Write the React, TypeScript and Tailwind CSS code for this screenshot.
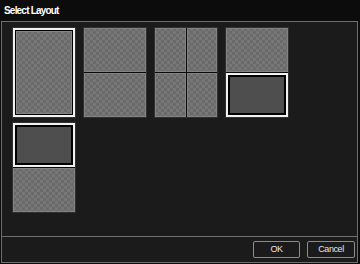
const checker =
  "bg-[conic-gradient(#777777_25%,#6a6a6a_0_50%,#777777_0_75%,#6a6a6a_0)] bg-[length:6px_6px]"

type Cell = "plain" | "picked" | "filled"

function LayoutCell({ kind }: { kind: Cell }) {
  if (kind === "filled") {
    return (
      <div className="flex-1 border-2 border-[#f2f2f2] bg-black p-[2px]">
        <div className="h-full w-full bg-[#4e4e4e]" />
      </div>
    )
  }
  if (kind === "picked") {
    return (
      <div className="flex-1 border-2 border-[#f2f2f2] bg-black p-[1px]">
        <div className={`h-full w-full ${checker} shadow-[inset_0_0_0_1px_#858585]`} />
      </div>
    )
  }
  return <div className={`flex-1 ${checker} shadow-[inset_0_0_0_1px_#828282]`} />
}

const layouts: Cell[][][] = [
  [["picked"]],
  [["plain"], ["plain"]],
  [["plain", "plain"], ["plain", "plain"]],
  [["plain"], ["filled"]],
  [["filled"], ["plain"]],
]

export default function App() {
  return (
    <div className="flex h-[264px] w-[360px] flex-col bg-[#0c0c0c] font-['Liberation_Sans',Arial,sans-serif]">
      <div className="flex h-[21px] shrink-0 items-center px-[4px] text-[10px] font-bold tracking-[-0.8px] text-white">
        Select Layout
      </div>
      <div className="mb-[1px] ml-[1px] mr-[2px] flex flex-1 flex-col border border-[#6e6e6e] bg-[#1b1b1b]">
        <div className="grid h-[214px] grid-cols-[repeat(4,64px)] content-start gap-x-[7px] gap-y-[4px] pl-[10px] pt-[5px]">
          {layouts.map((rows, i) => (
            <div key={i} className="flex h-[91px] flex-col bg-[#303030] p-[1px]">
              <div className="flex flex-1 flex-col gap-[1px] bg-[#0a0a0a]">
                {rows.map((row, r) => (
                  <div key={r} className="flex flex-1 gap-[1px]">
                    {row.map((cell, c) => (
                      <LayoutCell key={c} kind={cell} />
                    ))}
                  </div>
                ))}
              </div>
            </div>
          ))}
        </div>
        <div className="flex flex-1 items-center justify-end gap-[7px] border-t border-[#6e6e6e] pr-[2px]">
          <button className="h-[17px] w-[47px] rounded-[2px] border border-[#8c8c8c] text-[9px] tracking-[-0.4px] text-[#e6e6e6]">
            OK
          </button>
          <button className="h-[17px] w-[48px] rounded-[2px] border border-[#8c8c8c] text-[9px] tracking-[-0.4px] text-[#e6e6e6]">
            Cancel
          </button>
        </div>
      </div>
    </div>
  )
}
